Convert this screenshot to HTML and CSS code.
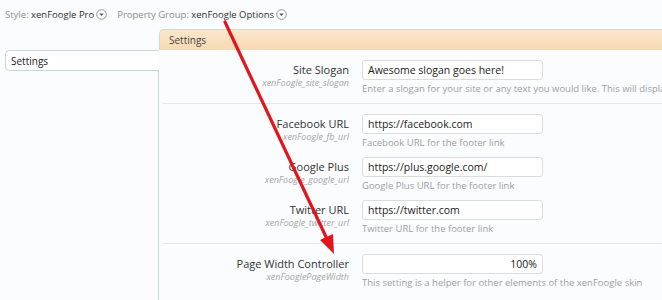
FILE: index.html
```html
<!DOCTYPE html>
<html>
<head>
<meta charset="utf-8">
<link rel="stylesheet" href="styles.css">
</head>
<body>
<div class="topbar">
  <span class="crumb"><span class="k">Style: </span><span class="v">xenFoogle Pro</span><span class="dd"><svg width="11" height="11" viewBox="0 0 11 11"><circle cx="5.5" cy="5.5" r="4.8" fill="#fff" stroke="#8a8a8a" stroke-width="0.9"/><path d="M3.2 4.4 L7.8 4.4 L5.5 7 Z" fill="#555"/></svg></span></span>
  <span class="crumb"><span class="k">Property Group: </span><span class="v">xenFoogle Options</span><span class="dd"><svg width="11" height="11" viewBox="0 0 11 11"><circle cx="5.5" cy="5.5" r="4.8" fill="#fff" stroke="#8a8a8a" stroke-width="0.9"/><path d="M3.2 4.4 L7.8 4.4 L5.5 7 Z" fill="#555"/></svg></span></span>
</div>
<div class="layout">
  <div class="tab">Settings</div>
  <div class="sidebar">
    <div class="side-item">Settings</div>
    <div class="side-rest"></div>
  </div>
  <div class="main">
    <div class="group">
      <div class="row">
        <div class="lab"><div class="name">Site Slogan</div><div class="key">xenFoogle_site_slogan</div></div>
        <div class="ctl"><div class="inp">Awesome slogan goes here!</div><div class="exp">Enter a slogan for your site or any text you would like. This will display</div></div>
      </div>
    </div>
    <div class="group">
      <div class="row">
        <div class="lab"><div class="name">Facebook URL</div><div class="key">xenFoogle_fb_url</div></div>
        <div class="ctl"><div class="inp">https://facebook.com</div><div class="exp">Facebook URL for the footer link</div></div>
      </div>
      <div class="row">
        <div class="lab"><div class="name">Google Plus</div><div class="key">xenFoogle_google_url</div></div>
        <div class="ctl"><div class="inp">https://plus.google.com/</div><div class="exp">Google Plus URL for the footer link</div></div>
      </div>
      <div class="row">
        <div class="lab"><div class="name">Twitter URL</div><div class="key">xenFoogle_twitter_url</div></div>
        <div class="ctl"><div class="inp">https://twitter.com</div><div class="exp">Twitter URL for the footer link</div></div>
      </div>
    </div>
    <div class="group last">
      <div class="row">
        <div class="lab"><div class="name">Page Width Controller</div><div class="key">xenFooglePageWidth</div></div>
        <div class="ctl"><div class="inp right">100%</div><div class="exp">This setting is a helper for other elements of the xenFoogle skin</div></div>
      </div>
    </div>
  </div>
</div>
<svg class="arrow" width="662" height="300" viewBox="0 0 662 300">
  <line x1="225" y1="22" x2="327" y2="239" stroke="#e3141b" stroke-width="3.2" stroke-linecap="round"/>
  <path d="M334 254 L320 240 L333 234 Z" fill="#e3141b"/>
</svg>
</body>
</html>
```
FILE: styles.css
```css
html, body {
  margin: 0;
  padding: 0;
}
body {
  width: 662px;
  height: 300px;
  overflow: hidden;
  background: #fbfcfe;
  font-family: "Open Sans", "Noto Sans", sans-serif;
  color: #333;
  position: relative;
}
.topbar {
  height: 29px;
  padding-left: 5px;
  display: flex;
  align-items: center;
  gap: 10px;
  font-size: 9.5px;
  box-sizing: border-box;
  padding-bottom: 1px;
}
.crumb {
  display: flex;
  align-items: center;
  white-space: pre;
}
.k { color: #8c8c8c; }
.v { color: #2f2f2f; }
.dd {
  display: inline-flex;
  margin-left: 2px;
}
.layout {
  display: grid;
  grid-template-columns: 154px 1fr;
  grid-template-rows: 21px 1fr;
  padding-left: 5px;
  height: 271px;
}
.tab {
  grid-column: 2;
  grid-row: 1;
  background: linear-gradient(#fbe6cc, #f7d9b3);
  border-top: 1px solid #c9dcdc;
  border-left: 1px solid #c9dcdc;
  border-top-left-radius: 5px;
  font-size: 10px;
  color: #444;
  padding-left: 9px;
  display: flex;
  align-items: center;
  box-sizing: border-box;
}
.sidebar {
  grid-column: 1;
  grid-row: 2;
  display: flex;
  flex-direction: column;
}
.side-item {
  height: 21px;
  box-sizing: border-box;
  border: 1px solid #c4d9d9;
  border-right: none;
  border-radius: 5px 0 0 5px;
  background: #fff;
  font-size: 10px;
  color: #222;
  padding-left: 5px;
  display: flex;
  align-items: center;
}
.side-rest {
  flex: 1;
  border-right: 1px solid #c4d9d9;
}
.main {
  grid-column: 2;
  grid-row: 2;
  padding-left: 4px;
  display: flex;
  flex-direction: column;
}
.group {
  padding-top: 10px;
  border-bottom: 1px solid #dde9ec;
}
.group.last { border-bottom: none; }
.row {
  height: 43px;
  display: flex;
  gap: 13px;
}
.lab {
  width: 186px;
  text-align: right;
}
.name {
  font-size: 11px;
  line-height: 14px;
  padding-top: 3px;
  color: #333;
  white-space: nowrap;
}
.key {
  font-size: 9px;
  line-height: 11px;
  font-style: italic;
  color: #a5a5a5;
  white-space: nowrap;
}
.ctl {
  display: flex;
  flex-direction: column;
  min-width: 0;
  overflow: hidden;
}
.inp {
  width: 181px;
  height: 20px;
  box-sizing: border-box;
  background: #fff;
  border: 1px solid #dcdcdc;
  border-radius: 3px;
  font-size: 10.5px;
  color: #222;
  padding: 0 5px;
  display: flex;
  align-items: center;
}
.inp.right { justify-content: flex-end; }
.exp {
  font-size: 9.5px;
  line-height: 13px;
  padding-top: 2px;
  color: #9e9e9e;
  white-space: nowrap;
}
.arrow {
  position: absolute;
  left: 0;
  top: 0;
  pointer-events: none;
}
```
